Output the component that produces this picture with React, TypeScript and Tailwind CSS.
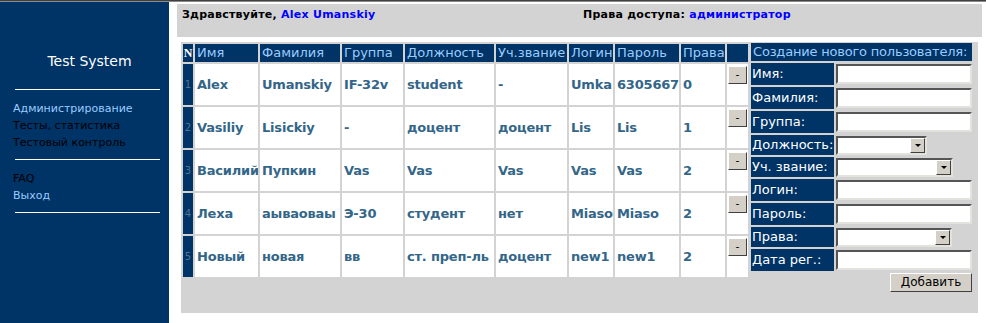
import React from 'react';

const font = { fontFamily: '"DejaVu Sans", Verdana, sans-serif' };

const headers = ['Имя', 'Фамилия', 'Группа', 'Должность', 'Уч.звание', 'Логин', 'Пароль', 'Права'];

const users = [
  ['1', 'Alex', 'Umanskiy', 'IF-32v', 'student', '-', 'Umka', '6305667', '0'],
  ['2', 'Vasiliy', 'Lisickiy', '-', 'доцент', 'доцент', 'Lis', 'Lis', '1'],
  ['3', 'Василий', 'Пупкин', 'Vas', 'Vas', 'Vas', 'Vas', 'Vas', '2'],
  ['4', 'Леха', 'аываоваы', 'Э-30', 'студент', 'нет', 'Miaso', 'Miaso', '2'],
  ['5', 'Новый', 'новая', 'вв', 'ст. преп-ль', 'доцент', 'new1', 'new1', '2'],
];

const TextInput = () => (
  <div className="h-[20px] w-[136px] bg-white border-2 border-t-[#555] border-l-[#555] border-b-[#e4e2dc] border-r-[#e4e2dc]" />
);

const Select = ({ width }: { width: string }) => (
  <div className={`${width} h-[19px] bg-white border-2 border-t-[#555] border-l-[#555] border-b-[#e4e2dc] border-r-[#e4e2dc] flex justify-end`}>
    <div className="w-[15px] h-full bg-[#d4d0c8] border border-t-white border-l-white border-b-[#404040] border-r-[#404040] flex items-center justify-center">
      <div className="w-0 h-0 border-l-[3px] border-r-[3px] border-t-[3px] border-l-transparent border-r-transparent border-t-black" />
    </div>
  </div>
);

const formRows: { label: string; h: string; field: React.ReactNode }[] = [
  { label: 'Имя:', h: 'h-[22px]', field: <TextInput /> },
  { label: 'Фамилия:', h: 'h-[22px]', field: <TextInput /> },
  { label: 'Группа:', h: 'h-[22px]', field: <TextInput /> },
  { label: 'Должность:', h: 'h-[20px]', field: <Select width="w-[91px]" /> },
  { label: 'Уч. звание:', h: 'h-[20px]', field: <Select width="w-[117px]" /> },
  { label: 'Логин:', h: 'h-[22px]', field: <TextInput /> },
  { label: 'Пароль:', h: 'h-[22px]', field: <TextInput /> },
  { label: 'Права:', h: 'h-[20px]', field: <Select width="w-[116px]" /> },
  { label: 'Дата рег.:', h: 'h-[22px]', field: <TextInput /> },
];

export default function App() {
  return (
    <div className="w-[986px] h-[323px] bg-white flex flex-col overflow-hidden" style={font}>
      <div className="h-px bg-[#404040]" />
      <div className="h-px bg-[#8a8a8a]" />
      <div className="flex flex-1">
        {/* sidebar */}
        <aside className="w-[169px] bg-[#003366] flex flex-col">
          <div className="pt-[50px] h-[68px] pl-[10px] text-center text-white text-[14px] leading-[18px]" style={{ fontFamily: '"Comic Sans MS", "DejaVu Sans", sans-serif' }}>
            Test System
          </div>
          <div className="mt-[19px] ml-[15px] w-[145px] h-px bg-white" />
          <nav className="mt-[10px] pl-[13px] flex flex-col text-[11px] leading-[17px]">
            <span className="text-[#99ccff]">Администрирование</span>
            <span className="text-black">Тесты, статистика</span>
            <span className="text-black">Тестовый контроль</span>
          </nav>
          <div className="mt-[8px] ml-[15px] w-[145px] h-px bg-white" />
          <nav className="mt-[10px] pl-[13px] flex flex-col text-[11px] leading-[17px]">
            <span className="text-black">FAQ</span>
            <span className="text-[#99ccff]">Выход</span>
          </nav>
          <div className="mt-[8px] ml-[15px] w-[145px] h-px bg-white" />
        </aside>

        {/* main */}
        <main className="flex-1 flex flex-col">
          <div className="mt-[2px] ml-[8px] mr-[4px] h-[33px] bg-[#d3d3d3] pt-[4px] pl-[5px] flex text-[11px] leading-[14px] font-bold tracking-[0.25px]">
            <div className="w-[401px]">
              Здравствуйте, <span className="text-[#0000ff]">Alex Umanskiy</span>
            </div>
            <div>
              Права доступа: <span className="text-[#0000ff]">администратор</span>
            </div>
          </div>

          <div className="mt-[5px] ml-[12px] mr-[8px] h-[271px] bg-[#d3d3d3] pl-[2px] flex items-start">
            {/* users table */}
            <div className="mt-[2px] grid grid-cols-[10px_63px_80px_61px_89px_71px_44px_64px_44px_21px] grid-rows-[18px_repeat(5,41px)] gap-[2px]">
              <div className="bg-[#003366] text-white font-bold text-[12px] leading-[18px] text-center" style={{ fontFamily: '"Liberation Serif", serif' }}>N</div>
              {headers.map(h => (
                <div key={h} className="bg-[#003366] text-[#99ccff] text-[13px] leading-[18px] pl-[2px] whitespace-nowrap overflow-hidden">{h}</div>
              ))}
              <div className="bg-[#003366]" />
              {users.map(u => (
                <React.Fragment key={u[0]}>
                  <div className="bg-[#003366] text-[#4f7597] text-[10px] flex items-center justify-center">{u[0]}</div>
                  {u.slice(1).map((v, i) => (
                    <div key={i} className="bg-white text-[#336688] font-bold text-[13px] pl-[2px] flex items-center whitespace-nowrap overflow-hidden tracking-[-0.2px]">{v}</div>
                  ))}
                  <div className="bg-white pt-[2px] pl-[1px]">
                    <button className="w-[19px] h-[18px] bg-[#d4d0c8] border border-t-white border-l-white border-b-[#404040] border-r-[#404040] text-[11px] leading-[14px] text-black flex items-center justify-center">-</button>
                  </div>
                </React.Fragment>
              ))}
            </div>

            {/* new user form */}
            <div className="ml-[3px] mt-[1px] w-[221px] flex flex-col gap-[2px]">
              <div className="h-[18px] bg-[#003366] text-[#99ccff] text-[13px] leading-[18px] pl-[2px] whitespace-nowrap overflow-hidden tracking-[-0.2px]">
                Создание нового пользователя:
              </div>
              {formRows.map(r => (
                <div key={r.label} className={`${r.h} flex gap-[2px]`}>
                  <div className="w-[83px] bg-[#003366] text-white text-[13px] pl-[1px] flex items-center whitespace-nowrap overflow-hidden">{r.label}</div>
                  <div className="flex-1 flex items-center">{r.field}</div>
                </div>
              ))}
              <div className="flex justify-end">
                <button className="w-[82px] h-[19px] bg-[#d4d0c8] border border-t-white border-l-white border-b-[#404040] border-r-[#404040] text-[12px] leading-[15px] text-black">Добавить</button>
              </div>
            </div>
          </div>
        </main>
      </div>
    </div>
  );
}
